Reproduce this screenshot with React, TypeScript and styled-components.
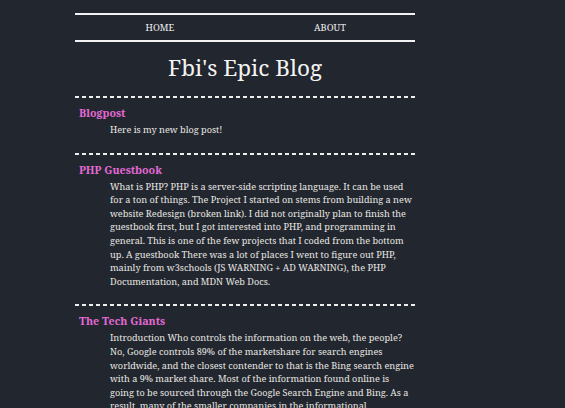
import styled, { createGlobalStyle } from 'styled-components'

const GlobalStyle = createGlobalStyle`
    html, body {
        margin: 0;
        padding: 0;
        background: #22262e;
        color: #e8e6e3;
        font-family: "Noto Serif", "DejaVu Serif", "Liberation Serif", serif;
    }
`

const Page = styled.div`
    width: 340px;
    margin: 0 0 0 75px;
    padding-top: 13px;
`

const Nav = styled.nav`
    display: grid;
    grid-template-columns: 1fr 1fr;
    border-top: 2px solid #f2f2f2;
    border-bottom: 2px solid #f2f2f2;
    height: 25px;
    align-items: center;
`

const NavLink = styled.a`
    text-align: center;
    font-size: 9.3px;
    color: #f0f0f0;
    text-decoration: none;
    text-transform: uppercase;
`

const Title = styled.h1`
    margin: 0;
    padding: 11px 0 13px;
    text-align: center;
    font-size: 22.5px;
    font-weight: normal;
    line-height: 30px;
    color: #f4f4f4;
`

const Post = styled.section`
    padding: 7px 0 16px;
    background-image: repeating-linear-gradient(
        to right,
        #eeeeee 0 4.5px,
        transparent 4.5px 7px
    );
    background-size: 100% 2px;
    background-repeat: no-repeat;
    background-position: top left;
`

const PostTitle = styled.h2`
    margin: 0 0 0 4px;
    font-size: 10.7px;
    line-height: 20px;
    color: #e46ad6;
`

const PostBody = styled.p`
    margin: 0;
    padding-left: 35px;
    font-size: 9.15px;
    line-height: 13.6px;
    color: #e8e6e3;
`

const posts = [
    {
        title: 'Blogpost',
        body: 'Here is my new blog post!',
    },
    {
        title: 'PHP Guestbook',
        body: 'What is PHP? PHP is a server-side scripting language. It can be used for a ton of things. The Project I started on stems from building a new website Redesign (broken link). I did not originally plan to finish the guestbook first, but I got interested into PHP, and programming in general. This is one of the few projects that I coded from the bottom up. A guestbook There was a lot of places I went to figure out PHP, mainly from w3schools (JS WARNING + AD WARNING), the PHP Documentation, and MDN Web Docs.',
    },
    {
        title: 'The Tech Giants',
        body: 'Introduction Who controls the information on the web, the people? No, Google controls 89% of the marketshare for search engines worldwide, and the closest contender to that is the Bing search engine with a 9% market share. Most of the information found online is going to be sourced through the Google Search Engine and Bing. As a result, many of the smaller companies in the informational',
    },
]

const App = () => {
    return (
        <>
            <GlobalStyle />
            <Page>
                <Nav>
                    <NavLink href="#">Home</NavLink>
                    <NavLink href="#">About</NavLink>
                </Nav>
                <Title>Fbi's Epic Blog</Title>
                {posts.map((post) => (
                    <Post key={post.title}>
                        <PostTitle>{post.title}</PostTitle>
                        <PostBody>{post.body}</PostBody>
                    </Post>
                ))}
            </Page>
        </>
    )
}

export default App
